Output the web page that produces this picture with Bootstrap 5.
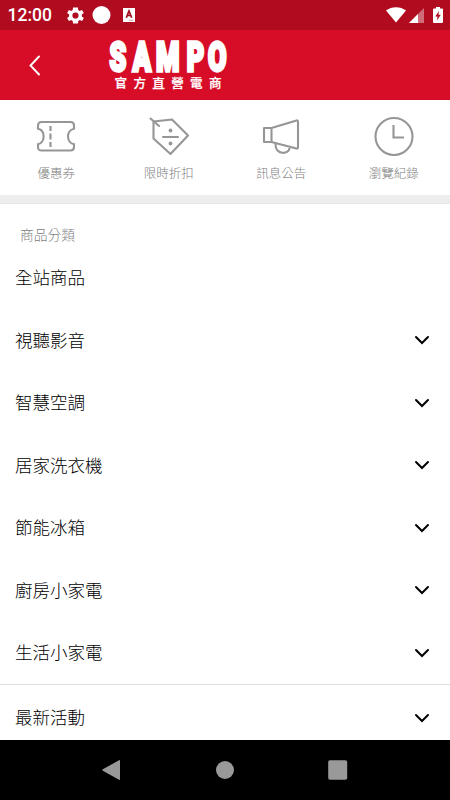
<!DOCTYPE html>
<html lang="zh-Hant">
<head>
<meta charset="utf-8">
<meta name="viewport" content="width=device-width, initial-scale=1">
<title>SAMPO 官方直營電商</title>
<link href="https://cdn.jsdelivr.net/npm/bootstrap@5.3.0/dist/css/bootstrap.min.css" rel="stylesheet">
<style>
body{font-family:"Noto Sans CJK TC","Noto Sans",sans-serif;color:#111;background:#fff}
.screen{height:800px}
svg{display:block;flex:none}
.status{height:30px;background:#b10b20;padding:0 6px 0 7.5px}
.clock{font:500 17.5px/31px Roboto,sans-serif;width:58px}
.brandbar{height:70px;background:#d70d28}
.quick{height:95px;padding-top:16px}
.quick a{color:#808080;font-size:12.5px;line-height:18px;font-weight:300}
.quick svg{margin-bottom:8px}
.band{height:9px;background:#ededed;border-bottom:1px solid #e6e6e6}
.label-line{height:42px;padding:9px 20px 0;font-size:13.75px;line-height:42px;color:#808080;font-weight:300}
.menu-row{height:62.5px;padding:0 20px 0 15px;font-size:17.5px;font-weight:300;color:#000}
.menu-row svg{margin-top:1px}
.divided{border-top:1px solid #ddd!important;height:66px}
.navkeys{height:60px;background:#000;padding:0 102px}
</style>
<script src="https://cdn.jsdelivr.net/npm/bootstrap@5.3.0/dist/js/bootstrap.bundle.min.js"></script>
</head>
<body>
<div class="screen d-flex flex-column overflow-hidden">
  <div class="status d-flex align-items-center text-white flex-shrink-0">
    <span class="clock">12:00</span>
    <svg width="19" height="19" viewBox="1.500 1.500 21.500 21" fill="#fff" fill-rule="evenodd"><path d="M19.400 13a8 8 0 0 0 0-2l2.200-1.700-2-3.500-2.600 1a8 8 0 0 0-1.700-1L15 3H9.500l-.4 2.800a8 8 0 0 0-1.700 1l-2.600-1-2 3.500L5 11a8 8 0 0 0 0 2l-2.200 1.700 2 3.500 2.600-1a8 8 0 0 0 1.700 1l.4 2.800H15l.4-2.800a8 8 0 0 0 1.700-1l2.600 1 2-3.500zM12.200 8.500a3.500 3.500 0 1 1 0 7 3.500 3.500 0 0 1 0-7z"/></svg>
    <svg width="19" height="18" style="margin-left:7px"><circle cx="9.500" cy="9" r="9" fill="#fff"/></svg>
    <svg width="12" height="14" viewBox="0 0 12 14" style="margin-left:12px"><path fill="#fff" d="M0 0h12v14H0z"/><path fill="none" stroke="#a00b1d" stroke-width="1.700" d="M3.300 9.700 6 3l2.700 6.700M4.200 7.500h3.600"/><path stroke="#c88" stroke-width=".8" d="M6 12.200h4.500"/></svg>
    <svg class="ms-auto" width="20" height="16" viewBox="0 0 20 16"><path fill="#fff" d="M0 3.500C5.500-1 14.500-1 20 3.500L10 15.500z"/></svg>
    <svg width="15" height="15" viewBox="0 0 15 15" style="margin-left:3px"><path fill="#fff" fill-opacity=".4" d="M15 0v15H0z"/><path fill="#fff" d="M9 6v9H0z"/></svg>
    <svg width="10" height="16" viewBox="0 0 10 16" style="margin-left:9px;margin-right:1px"><path fill="#fff" d="M3 0h4v1.600h2q1 0 1 1V15q0 1-1 1H1q-1 0-1-1V2.600q0-1 1-1h2z"/><path fill="#b10b20" d="M6 4 2.200 9.500h2.300L4 13.500l3.800-5.700H5.500z"/></svg>
  </div>
  <header class="brandbar d-flex flex-shrink-0">
    <svg width="450" height="70" viewBox="0 0 450 70" fill="#fff">
      <path d="M39 26.500 30.500 35.500 39 44.500" fill="none" stroke="#fff" stroke-width="1.900" stroke-linecap="round"/>
      <g transform="scale(.66 1)"><text y="41.500" font-family="Roboto" font-weight="900" font-size="40.500" stroke="#fff" stroke-width="3.400" x="166 201 236.500 283 315">SAMPO</text></g>
      <text x="114.500" y="57.500" font-size="12.500" font-weight="500" stroke="#fff" stroke-width=".25" letter-spacing="6.400">官方直營電商</text>
    </svg>
  </header>
  <nav class="quick row g-0 text-center flex-shrink-0">
    <a class="col text-decoration-none d-flex flex-column align-items-center" href="#"><svg width="40" height="40" viewBox="0 0 40 40" fill="none" stroke="#969696" stroke-width="2.100"><path d="M5.500 6h29q3.500 0 3.500 3.500v3.200c-8 1.500-8 14.200 0 15.500V31q0 3.500-3.500 3.500h-29Q2 34.500 2 31v-2.800c7.500-1.300 7.500-14 0-15.500V9.500Q2 6 5.500 6z"/><path d="M14.500 10v5M14.500 17.500v6M14.500 26v5" stroke-width="2.200"/></svg>優惠券</a>
    <a class="col text-decoration-none d-flex flex-column align-items-center" href="#"><svg width="40" height="40" viewBox="0 0 40 40" fill="none" stroke="#969696" stroke-width="2.100" stroke-linejoin="round" stroke-linecap="round"><path d="M4.500 5.500 23 3.500 39 19.500 21.500 38 4.500 22.500z"/><path d="M1.500 2.500 10 10M14 21h15"/><g fill="#969696" stroke="none"><circle cx="21.500" cy="14.500" r="1.900"/><circle cx="21.500" cy="27.500" r="1.900"/></g></svg>限時折扣</a>
    <a class="col text-decoration-none d-flex flex-column align-items-center" href="#"><svg width="40" height="40" viewBox="0 0 40 40" fill="none" stroke="#969696" stroke-width="2.100" stroke-linejoin="round"><path d="M3 12h7.500v14H3zM10.500 12 35.500 4.500Q37 4 37 6v25q0 2-1.500 1.500L10.500 26zM14.500 28c-.5 11 13.500 11 14 4"/></svg>訊息公告</a>
    <a class="col text-decoration-none d-flex flex-column align-items-center" href="#"><svg width="40" height="40" viewBox="0 0 40 40" fill="none" stroke="#969696" stroke-width="2.100"><circle cx="20" cy="20.500" r="18.500"/><path d="M19.500 9v12.500H30"/></svg>瀏覽紀錄</a>
  </nav>
  <div class="band flex-shrink-0"></div>
  <main class="flex-grow-1 overflow-hidden">
    <div class="label-line">商品分類</div>
    <div class="list-group list-group-flush">
      <a class="menu-row list-group-item border-0 d-flex align-items-center" href="#">全站商品</a>
      <a class="menu-row list-group-item border-0 d-flex align-items-center justify-content-between" href="#">視聽影音<svg width="16" height="10" viewBox="0 0 16 10" fill="none" stroke="#000" stroke-width="2" stroke-linecap="round"><path d="m2 2 6 6 6-6"/></svg></a>
      <a class="menu-row list-group-item border-0 d-flex align-items-center justify-content-between" href="#">智慧空調<svg width="16" height="10" viewBox="0 0 16 10" fill="none" stroke="#000" stroke-width="2" stroke-linecap="round"><path d="m2 2 6 6 6-6"/></svg></a>
      <a class="menu-row list-group-item border-0 d-flex align-items-center justify-content-between" href="#">居家洗衣機<svg width="16" height="10" viewBox="0 0 16 10" fill="none" stroke="#000" stroke-width="2" stroke-linecap="round"><path d="m2 2 6 6 6-6"/></svg></a>
      <a class="menu-row list-group-item border-0 d-flex align-items-center justify-content-between" href="#">節能冰箱<svg width="16" height="10" viewBox="0 0 16 10" fill="none" stroke="#000" stroke-width="2" stroke-linecap="round"><path d="m2 2 6 6 6-6"/></svg></a>
      <a class="menu-row list-group-item border-0 d-flex align-items-center justify-content-between" href="#">廚房小家電<svg width="16" height="10" viewBox="0 0 16 10" fill="none" stroke="#000" stroke-width="2" stroke-linecap="round"><path d="m2 2 6 6 6-6"/></svg></a>
      <a class="menu-row list-group-item border-0 d-flex align-items-center justify-content-between" href="#">生活小家電<svg width="16" height="10" viewBox="0 0 16 10" fill="none" stroke="#000" stroke-width="2" stroke-linecap="round"><path d="m2 2 6 6 6-6"/></svg></a>
      <a class="menu-row divided list-group-item border-0 d-flex align-items-center justify-content-between" href="#">最新活動<svg width="16" height="10" viewBox="0 0 16 10" fill="none" stroke="#000" stroke-width="2" stroke-linecap="round"><path d="m2 2 6 6 6-6"/></svg></a>
    </div>
  </main>
  <footer class="navkeys d-flex align-items-center justify-content-between flex-shrink-0">
    <svg width="20" height="20" viewBox="0 0 20 20" fill="#999"><path d="M17 .3q1-.6 1 .7v18q0 1.300-1 .7L.8 10.700q-1-.7 0-1.400z"/></svg>
    <svg width="20" height="20"><circle cx="10" cy="10" r="9" fill="#999"/></svg>
    <svg width="20" height="20"><rect x=".2" y=".2" width="19" height="19.500" rx="1.800" fill="#999"/></svg>
  </footer>
</div>
</body>
</html>
